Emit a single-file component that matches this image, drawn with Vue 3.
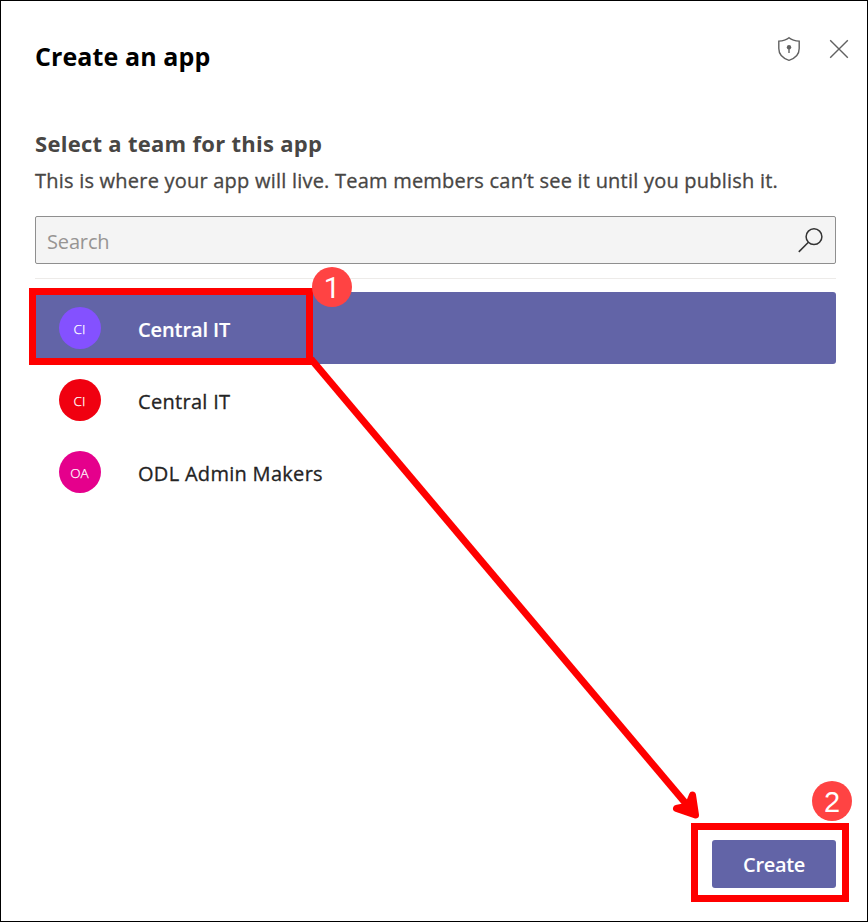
<script setup>
const teams = [
  { initials: 'CI', name: 'Central IT', color: '#8451ff', selected: true },
  { initials: 'CI', name: 'Central IT', color: '#f00010', selected: false },
  { initials: 'OA', name: 'ODL Admin Makers', color: '#e5008c', selected: false }
]
</script>

<template>
  <main class="dialog">
    <header class="header">
      <h1 class="title">Create an app</h1>
      <div class="actions">
        <svg class="shield" width="24" height="26" viewBox="0 0 24 26" aria-label="Privacy">
          <path d="M12 1.7C9 4.2 5.7 5 1.8 5.1V12.5C1.8 18.5 6 22.4 12 24.3C18 22.4 22.2 18.5 22.2 12.5V5.1C18.3 5 15 4.2 12 1.7Z" />
          <circle cx="12" cy="11.3" r="2.2" />
          <path d="M12 12V17" />
        </svg>
        <svg class="close" width="20" height="20" viewBox="0 0 20 20" aria-label="Close">
          <path d="M1.2 1.2L18.8 18.8M18.8 1.2L1.2 18.8" />
        </svg>
      </div>
    </header>
    <section class="intro">
      <h2 class="subtitle">Select a team for this app</h2>
      <p class="description">This is where your app will live. Team members can’t see it until you publish it.</p>
    </section>
    <div class="search">
      <span class="placeholder">Search</span>
      <svg width="26" height="26" viewBox="0 0 26 26" aria-hidden="true">
        <circle cx="16" cy="9.7" r="7.9" />
        <path d="M10.4 15.3L0.8 24.9" />
      </svg>
    </div>
    <ul class="teams">
      <li v-for="(team, i) in teams" :key="i" class="team" :class="{ selected: team.selected }">
        <span class="avatar" :style="{ background: team.color }">{{ team.initials }}</span>
        <span class="name">{{ team.name }}</span>
      </li>
    </ul>
    <footer class="footer">
      <button class="create"><span>Create</span></button>
    </footer>

    <svg class="arrow" width="868" height="922" viewBox="0 0 868 922" aria-hidden="true">
      <path class="shaft" d="M311 359L693 812" />
      <path class="head" d="M692.5 795L695.5 815L676.5 808.5L688 806Z" />
    </svg>
    <div class="callout first"></div>
    <div class="callout second"></div>
    <span class="step one">1</span>
    <span class="step two">2</span>
  </main>
</template>

<style>
body {
  background: #fff;
}
</style>

<style scoped>
* {
  box-sizing: border-box;
}
.dialog {
  position: relative;
  display: flex;
  flex-direction: column;
  width: 868px;
  height: 922px;
  padding: 0 31px 33px 34px;
  border: 1px solid #000;
  background: #fff;
  overflow: hidden;
  font-family: "Open Sans", "Noto Sans", sans-serif;
}
.header {
  display: flex;
  justify-content: space-between;
  height: 94px;
  padding-top: 35px;
  margin-right: -13px;
}
.title {
  margin: 0;
  color: #000;
  font-size: 25px;
  font-weight: 700;
  letter-spacing: 0.1px;
  line-height: 40px;
  white-space: nowrap;
}
.actions {
  display: flex;
  align-items: center;
  gap: 28px;
  height: 26px;
}
.actions svg {
  fill: none;
  stroke: #616161;
  stroke-width: 1.4;
}
.actions circle {
  fill: #616161;
  stroke: none;
}
.intro {
  height: 121px;
  padding-top: 32px;
  white-space: nowrap;
}
.subtitle {
  margin: 0;
  color: #484644;
  font-size: 22px;
  font-weight: 700;
  letter-spacing: 0.28px;
  line-height: 32px;
}
.description {
  margin: 5px 0 0;
  color: #484644;
  font-size: 20px;
  letter-spacing: 0.22px;
  line-height: 34px;
  -webkit-text-stroke: 0.3px currentColor;
}
.search {
  display: flex;
  align-items: center;
  justify-content: space-between;
  height: 48px;
  padding: 0 11px;
  border: 1px solid #8f8f8f;
  border-radius: 2px;
  background: #f4f4f4;
}
.placeholder {
  padding-top: 3px;
  color: #979593;
  font-size: 20px;
  letter-spacing: -0.15px;
}
.search svg {
  fill: none;
  stroke: #333;
  stroke-width: 1.5;
}
.teams {
  flex: 1;
  margin: 14px 0 0;
  padding: 13px 0 0;
  border-top: 1px solid #edebe9;
  list-style: none;
}
.team {
  display: flex;
  align-items: center;
  gap: 37px;
  height: 72px;
  padding-left: 24px;
  border-radius: 3px;
  color: #242424;
}
.selected {
  background: #6264a7;
  color: #fff;
}
.avatar {
  display: flex;
  align-items: center;
  justify-content: center;
  width: 42px;
  height: 42px;
  padding: 2px 1px 0 0;
  border-radius: 50%;
  color: #fff;
  font-size: 13.5px;
  font-weight: 300;
  -webkit-text-stroke: 0.25px currentColor;
}
.name {
  padding-top: 2px;
  font-size: 20px;
  letter-spacing: 0.3px;
  white-space: nowrap;
  -webkit-text-stroke: 0.3px currentColor;
}
.selected .name {
  font-weight: 600;
  letter-spacing: -0.1px;
  -webkit-text-stroke: 0.15px currentColor;
}
.footer {
  display: flex;
  justify-content: flex-end;
}
.create {
  display: flex;
  align-items: center;
  justify-content: center;
  width: 124px;
  height: 48px;
  padding: 1px 0 0;
  border: 0;
  border-radius: 3px;
  background: #6264a7;
  color: #fff;
  font: 600 20px/30px "Open Sans", "Noto Sans", sans-serif;
  letter-spacing: -0.35px;
}
.arrow {
  position: absolute;
  top: -1px;
  left: -1px;
}
.shaft {
  fill: none;
  stroke: #f00;
  stroke-width: 7;
}
.head {
  fill: #f00;
  stroke: #f00;
  stroke-width: 7;
  stroke-linejoin: round;
}
.callout {
  position: absolute;
  border: 7px solid #f00;
}
.callout.first {
  left: 28px;
  top: 287px;
  width: 284px;
  height: 77px;
}
.callout.second {
  left: 690px;
  top: 822px;
  width: 158px;
  height: 79px;
}
.step {
  position: absolute;
  width: 40px;
  height: 40px;
  border-radius: 50%;
  background: #ff4343;
  color: #fff;
  font: 29px/42px Roboto, sans-serif;
  text-align: center;
}
.step.one {
  left: 311px;
  top: 266px;
}
.step.two {
  left: 811px;
  top: 780px;
  font-family: "Liberation Sans", sans-serif;
}
</style>
